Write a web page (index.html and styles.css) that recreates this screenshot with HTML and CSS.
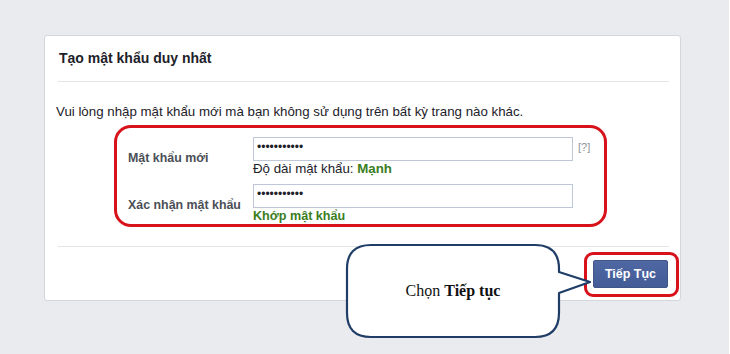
FILE: index.html
```html
<!DOCTYPE html>
<html lang="vi">
<head>
<meta charset="utf-8">
<title>Tạo mật khẩu duy nhất</title>
<link rel="stylesheet" href="styles.css">
</head>
<body>
<div class="page">
  <div class="card">
    <div class="card-header">Tạo mật khẩu duy nhất</div>
    <p class="intro">Vui lòng nhập mật khẩu mới mà bạn không sử dụng trên bất kỳ trang nào khác.</p>
    <div class="highlight form">
      <div class="row">
        <label class="label" for="pw1">Mật khẩu mới</label>
        <div class="field">
          <div class="input-line">
            <input id="pw1" class="input" type="password" value="abcdefghijk" readonly>
            <span class="help">[?]</span>
          </div>
          <div class="hint">Độ dài mật khẩu: <b class="ok">Mạnh</b></div>
        </div>
      </div>
      <div class="row">
        <label class="label" for="pw2">Xác nhận mật khẩu</label>
        <div class="field">
          <div class="input-line">
            <input id="pw2" class="input" type="password" value="abcdefghijk" readonly>
          </div>
          <div class="hint"><b class="ok ok-lg">Khớp mật khẩu</b></div>
        </div>
      </div>
    </div>
    <div class="divider"></div>
    <div class="footer">
      <div class="highlight btn-ring">
        <button class="btn" type="button">Tiếp Tục</button>
      </div>
    </div>
  </div>
  <div class="bubble">
    <svg class="bubble-shape" width="260" height="105" viewBox="0 0 260 105">
      <path d="M31 5 H195 Q219 5 219 29 V32 L250 42 L219 53 V73 Q219 97 195 97 H31 Q7 97 7 73 V29 Q7 5 31 5 Z" fill="#ffffff" stroke="#1f3d66" stroke-width="2.2" stroke-linejoin="round"/>
    </svg>
    <div class="bubble-text"><span>Chọn <b>Tiếp tục</b></span></div>
  </div>
</div>
</body>
</html>
```
FILE: styles.css
```css
html, body {
  margin: 0;
  padding: 0;
  background: #ffffff;
}
.page {
  position: relative;
  width: 729px;
  height: 354px;
  overflow: hidden;
  background: #e9ebee;
  box-sizing: border-box;
  padding: 35px 0 0 44px;
  font-family: "Liberation Sans", Arial, sans-serif;
  color: #1d2129;
}
.card {
  width: 637px;
  box-sizing: border-box;
  background: #ffffff;
  border: 1px solid #d3d6db;
  border-radius: 3px;
}
.card-header {
  margin: 0 11px 0 13px;
  padding: 13px 0 14px 1px;
  line-height: 18px;
  font-size: 14px;
  font-weight: bold;
  color: #1d2129;
  border-bottom: 1px solid #e5e5e5;
}
.intro {
  margin: 22px 0 0 11px;
  font-size: 13.3px;
  line-height: 16px;
  color: #1d2129;
}
.highlight {
  border: 3px solid #d8121b;
  box-sizing: border-box;
}
.form {
  margin: 5px 0 0 69px;
  width: 493px;
  border-radius: 17px;
  padding: 9px 0 0 11px;
  display: flex;
  flex-direction: column;
  gap: 7px;
}
.row {
  display: flex;
  align-items: center;
}
.label {
  width: 125px;
  flex: none;
  font-size: 12.4px;
  font-weight: bold;
  color: #4b4f56;
  padding-top: 2px;
}
.field {
  display: flex;
  flex-direction: column;
}
.input-line {
  display: flex;
  align-items: flex-start;
}
.input {
  width: 320px;
  height: 24px;
  box-sizing: border-box;
  margin: 0;
  border: 1px solid #bdc7d8;
  border-radius: 0;
  padding: 0 3px 5px;
  font-family: "Liberation Sans", Arial, sans-serif;
  font-size: 12px;
  color: #1d2129;
  background: #ffffff;
  outline: none;
}
.help {
  margin: 4px 0 0 5px;
  font-size: 11px;
  color: #90949c;
}
.hint {
  font-size: 13.3px;
  line-height: 16px;
  color: #1d2129;
}
.ok {
  color: #3b7d1e;
}
.ok-lg {
  font-size: 12.6px;
}
.divider {
  margin: 19px 11px 0 13px;
  border-top: 1px solid #e5e5e5;
}
.footer {
  display: flex;
  justify-content: flex-end;
  padding: 5px 1px 3px;
}
.btn-ring {
  border-radius: 9px;
  padding: 5px 8px 6px 6px;
}
.btn {
  display: block;
  width: 75px;
  height: 28px;
  margin: 0;
  padding: 0;
  border: 1px solid #3f5788;
  border-radius: 2px;
  background: linear-gradient(#4f68a3, #435c96);
  color: #ffffff;
  font-family: "Liberation Sans", Arial, sans-serif;
  font-size: 12.5px;
  font-weight: bold;
}
.bubble {
  position: absolute;
  left: 340px;
  top: 240px;
  width: 260px;
  height: 105px;
}
.bubble-shape {
  position: absolute;
  left: 0;
  top: 0;
}
.bubble-text {
  position: absolute;
  left: 7px;
  top: 5px;
  width: 212px;
  height: 92px;
  display: flex;
  align-items: center;
  justify-content: center;
  font-family: "Liberation Serif", "Times New Roman", serif;
  font-size: 16px;
  color: #111111;
}
```
